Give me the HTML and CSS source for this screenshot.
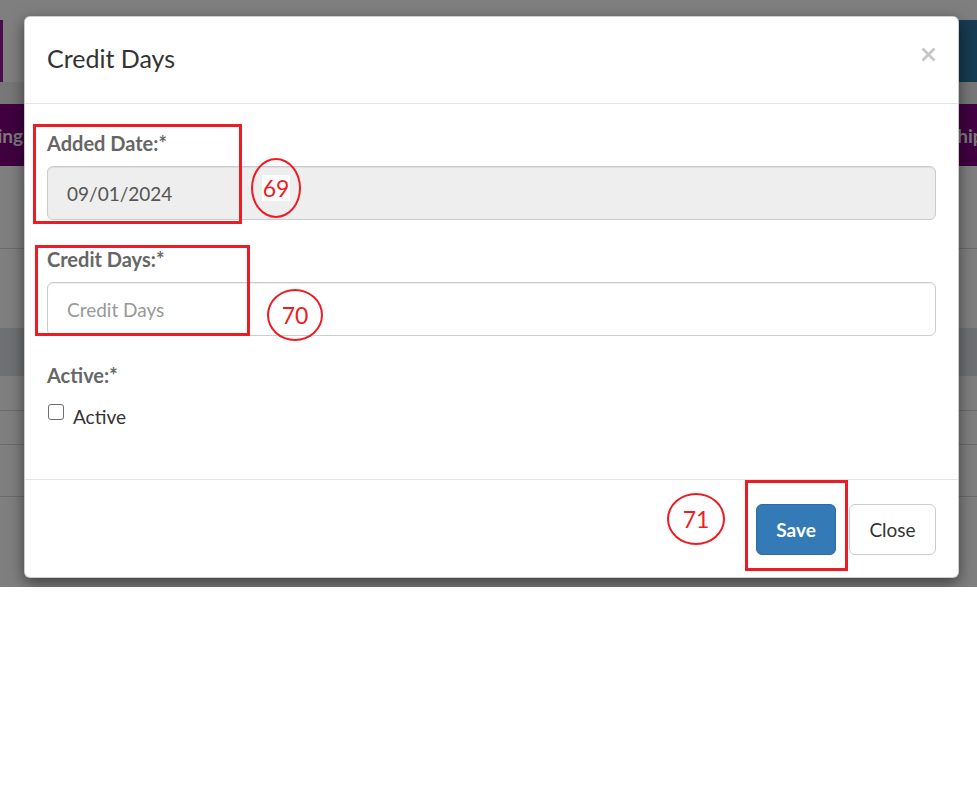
FILE: index.html
```html
<!DOCTYPE html>
<html lang="en">
<head>
<meta charset="utf-8">
<title>Credit Days</title>
<link rel="stylesheet" href="styles.css">
</head>
<body>
<div class="screen">
  <div class="app">
    <div class="app-top"></div>
    <div class="navbar">
      <div class="nav-logo"></div>
      <div class="nav-user"></div>
    </div>
    <div class="strip"></div>
    <div class="tabbar">
      <div class="tab tab-left"><span>Shipping</span></div>
      <div class="tab tab-right"><span>Shipping</span></div>
    </div>
    <div class="content">
      <div class="row row-a"></div>
      <div class="row row-b"></div>
      <div class="row row-head"></div>
      <div class="row row-c"></div>
      <div class="row row-d"></div>
      <div class="row row-e"></div>
    </div>
  </div>

  <div class="backdrop"></div>

  <div class="modal">
    <div class="modal-header">
      <h4 class="modal-title">Credit Days</h4>
      <svg class="close" width="15" height="15" viewBox="0 0 15 15" aria-label="Close">
        <path d="M1.5 1.5 L13.5 13.5 M13.5 1.5 L1.5 13.5" stroke="#c6c6c6" stroke-width="2.6" stroke-linecap="butt" fill="none"/>
      </svg>
    </div>
    <div class="modal-body">
      <div class="group">
        <label class="label">Added Date:*</label>
        <input class="input input-readonly" type="text" value="09/01/2024" readonly>
      </div>
      <div class="group">
        <label class="label">Credit Days:*</label>
        <input class="input" type="text" placeholder="Credit Days">
      </div>
      <div class="group-last">
        <label class="label">Active:*</label>
        <label class="check"><input type="checkbox"><span>Active</span></label>
      </div>
    </div>
    <div class="modal-footer">
      <button class="btn btn-primary" type="button">Save</button>
      <button class="btn btn-default" type="button">Close</button>
    </div>
  </div>

  <div class="anno-rect anno-r1"></div>
  <div class="anno-rect anno-r2"></div>
  <div class="anno-rect anno-r3"></div>
  <div class="anno-num anno-n1"><span class="num-bg">69</span></div>
  <div class="anno-num anno-n2"><span>70</span></div>
  <div class="anno-num anno-n3"><span>71</span></div>
</div>
</body>
</html>
```

FILE: styles.css
```css
* {
  box-sizing: border-box;
}

body {
  margin: 0;
  background: #ffffff;
  font-family: Lato, "Noto Sans", "DejaVu Sans", sans-serif;
}

.screen {
  position: relative;
  width: 977px;
  height: 587px;
  overflow: hidden;
}

/* ---------- page behind the dialog ---------- */
.app {
  display: flex;
  flex-direction: column;
  height: 100%;
  background: #ffffff;
}

.app-top {
  height: 20px;
}

.navbar {
  height: 62px;
  display: flex;
  justify-content: space-between;
}

.nav-logo {
  width: 3px;
  background: #961896;
}

.nav-user {
  width: 140px;
  background: #2c76a4;
}

.strip {
  height: 22px;
  background: #eeeeee;
}

.tabbar {
  height: 62px;
  background: #800080;
  display: flex;
  justify-content: space-between;
  align-items: center;
  color: #f2f2f2;
  font-weight: 700;
  font-size: 19px;
}

.tab {
  display: flex;
  overflow: hidden;
  white-space: nowrap;
}

.tab-left {
  width: 23px;
  justify-content: flex-end;
}

.tab-right {
  width: 30px;
  justify-content: flex-start;
}

.content {
  flex: 1;
  display: flex;
  flex-direction: column;
}

.row {
  border-bottom: 1px solid #d6d6d6;
}

.row-a {
  height: 83px;
}

.row-b {
  height: 79px;
  border-bottom: none;
}

.row-head {
  height: 48px;
  background: #dfe1e6;
  border-bottom: none;
}

.row-c {
  height: 35px;
}

.row-d {
  height: 34px;
}

.row-e {
  height: 52px;
}

.backdrop {
  position: absolute;
  inset: 0;
  background: rgba(0, 0, 0, 0.5);
}

/* ---------- dialog ---------- */
.modal {
  position: absolute;
  left: 24px;
  top: 16px;
  width: 935px;
  background: #ffffff;
  border: 1px solid rgba(0, 0, 0, 0.2);
  border-radius: 6px;
  box-shadow: 0 5px 15px rgba(0, 0, 0, 0.5);
}

.modal-header {
  height: 87px;
  display: flex;
  justify-content: space-between;
  align-items: flex-start;
  padding: 26px 22px 30px;
  border-bottom: 1px solid #e5e5e5;
}

.modal-title {
  margin: 0;
  font-size: 25px;
  line-height: 30px;
  font-weight: 400;
  color: #333333;
}

.close {
  margin-top: 4px;
  display: block;
}

.modal-body {
  padding: 24px 22px 47px;
}

.group {
  margin-bottom: 24px;
}

.label {
  display: block;
  font-size: 20px;
  line-height: 30px;
  font-weight: 700;
  color: #666666;
  margin-bottom: 8px;
}

.input {
  display: block;
  width: 100%;
  height: 54px;
  padding: 0 19px;
  font-family: Lato, "Noto Sans", sans-serif;
  font-size: 19px;
  color: #555555;
  background: #ffffff;
  border: 1px solid #cccccc;
  border-radius: 6px;
  box-shadow: inset 0 1px 1px rgba(0, 0, 0, 0.075);
  outline: none;
}

.input::placeholder {
  color: #999999;
  opacity: 1;
}

.input-readonly {
  background: #eeeeee;
}

.check {
  display: flex;
  align-items: flex-start;
  height: 34px;
  padding-top: 4px;
  font-size: 19px;
  line-height: 30px;
  color: #333333;
}

.check input {
  appearance: none;
  -webkit-appearance: none;
  width: 16px;
  height: 16px;
  margin: 2px 9px 0 1px;
  border: 1.5px solid #6e6e6e;
  border-radius: 3px;
  background: #ffffff;
}

.modal-footer {
  display: flex;
  justify-content: flex-end;
  gap: 13px;
  padding: 24px 22px 22px;
  border-top: 1px solid #e5e5e5;
}

.btn {
  height: 51px;
  padding: 0;
  border: 1px solid;
  border-radius: 6px;
  font-family: Lato, "Noto Sans", sans-serif;
  font-size: 19px;
}

.btn-primary {
  width: 80px;
  background: #337ab7;
  border-color: #2e6da4;
  color: #ffffff;
  font-weight: 700;
}

.btn-default {
  width: 87px;
  background: #ffffff;
  border-color: #cccccc;
  color: #333333;
}

/* ---------- red annotations ---------- */
.anno-rect {
  position: absolute;
  border: 3px solid #ed1c24;
}

.anno-r1 {
  left: 33px;
  top: 124px;
  width: 209px;
  height: 100px;
}

.anno-r2 {
  left: 35px;
  top: 245px;
  width: 215px;
  height: 91px;
}

.anno-r3 {
  left: 745px;
  top: 480px;
  width: 103px;
  height: 91px;
}

.anno-num {
  position: absolute;
  display: flex;
  align-items: center;
  justify-content: center;
  border: 2.5px solid #ed1c24;
  border-radius: 50%;
  color: #ed1c24;
  font-size: 23px;
  line-height: 26px;
}

.num-bg {
  background: #ffffff;
  padding: 0 1px;
}

.anno-n1 {
  left: 251px;
  top: 158px;
  width: 50px;
  height: 60px;
}

.anno-n2 {
  left: 267px;
  top: 289px;
  width: 56px;
  height: 52px;
}

.anno-n3 {
  left: 667px;
  top: 493px;
  width: 58px;
  height: 52px;
}
```
